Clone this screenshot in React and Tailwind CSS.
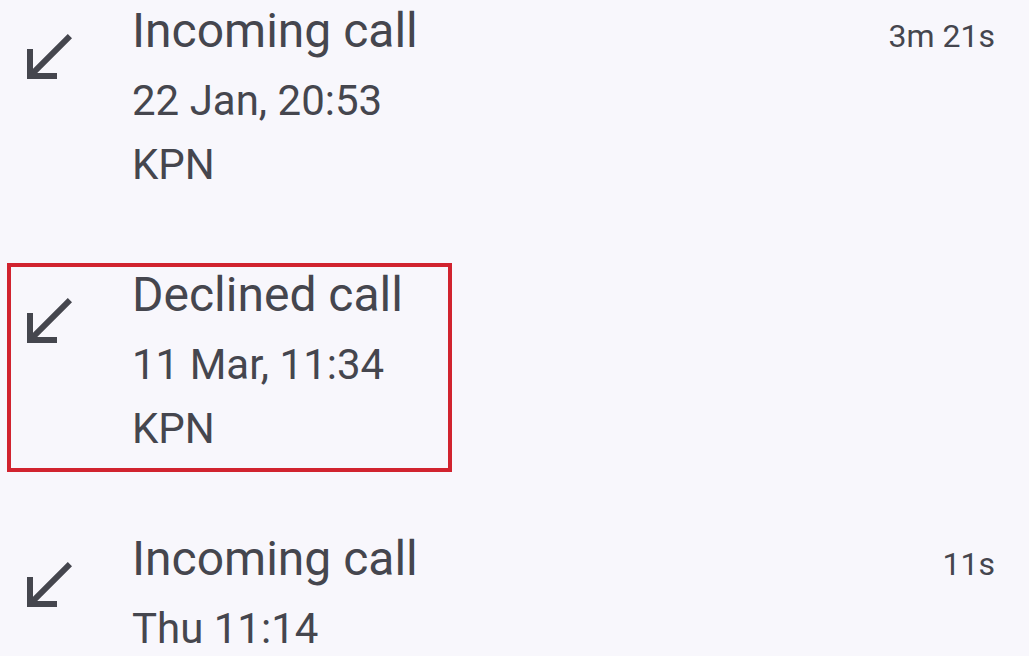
const calls = [
  { title: "Incoming call", duration: "3m 21s", lines: ["22 Jan, 20:53", "KPN"] },
  { title: "Declined call", duration: "", lines: ["11 Mar, 11:34", "KPN"], marked: true },
  { title: "Incoming call", duration: "11s", lines: ["Thu 11:14"] },
];

// material symbols "call_received"
const CallReceived = () => (
  <svg width="72" height="72" viewBox="0 -960 960 960" fill="currentColor">
    <path d="M200-200v-400h80v264l464-464 56 56-464 464h264v80H200Z" />
  </svg>
);

const CallRow = ({ call }) => {
  return (
    <div className="relative flex">
      <div className="pl-[12px] pt-[29px] shrink-0">
        <CallReceived />
      </div>
      <div className="ml-[48px] flex-1 flex flex-col pr-[34px]">
        <div className="flex items-baseline justify-between">
          <span className="text-[48px] leading-[76px]">{call.title}</span>
          {call.duration && (
            <span className="text-[32px] leading-[40px]">{call.duration}</span>
          )}
        </div>
        {call.lines.map((line, i) => (
          <span key={i} className="text-[42px] leading-[64px]">
            {line}
          </span>
        ))}
      </div>
      {call.marked && (
        <div className="absolute left-[7px] top-[6px] w-[445px] h-[209px] border-[4px] border-[#d1232f]" />
      )}
    </div>
  );
};

export default function App() {
  return (
    <div
      className="w-[1029px] h-[656px] overflow-hidden bg-[#f8f7fc] text-[#45464e]"
      style={{ fontFamily: "Roboto, 'Liberation Sans', sans-serif" }}
    >
      <div className="-mt-[7px] flex flex-col gap-[60px]">
        {calls.map((call, i) => (
          <CallRow key={i} call={call} />
        ))}
      </div>
    </div>
  );
}
